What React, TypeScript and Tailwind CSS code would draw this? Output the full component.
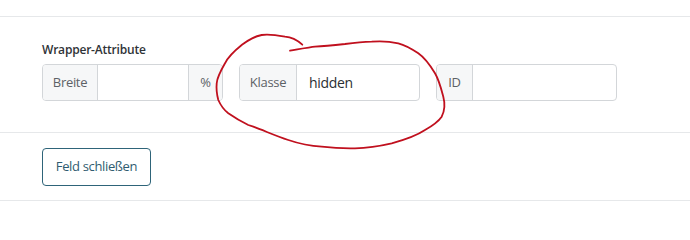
import React from "react";

function Addon({ text, w, side }: { text: string; w: string; side: "l" | "r" }) {
  return (
    <div
      className={
        "flex shrink-0 items-center justify-center bg-[#f6f7f8] text-[13px] tracking-[-0.3px] text-[#5c6166] border-[#d3d6d9] " +
        (side === "l" ? "border-r " : "border-l ") +
        w
      }
    >
      {text}
    </div>
  );
}

export default function App() {
  return (
    <div className="relative w-[690px] h-[210px] bg-white overflow-hidden" style={{ fontFamily: '"Open Sans", "Noto Sans", sans-serif' }}>
      <div className="h-[17px] border-b border-[#e6e8ea]" />
      <div className="pl-[42px] pt-[25px] pb-[31px] border-b border-[#e6e8ea]">
        <div className="text-[12px] font-semibold tracking-[-0.2px] text-[#2f3337] leading-[16px] mb-[6px]">Wrapper-Attribute</div>
        <div className="grid w-[575px] grid-cols-3 gap-4">
          <div className="flex h-[37px] rounded-[4px] border border-[#d3d6d9] bg-white overflow-hidden">
            <Addon text="Breite" w="w-[55px]" side="l" />
            <div className="flex-1" />
            <Addon text="%" w="w-[34px]" side="r" />
          </div>
          <div className="flex h-[37px] rounded-[4px] border border-[#d3d6d9] bg-white overflow-hidden">
            <Addon text="Klasse" w="w-[57px]" side="l" />
            <div className="flex flex-1 items-center pl-[12px] text-[14px] tracking-[-0.3px] text-[#2b2f33]">hidden</div>
          </div>
          <div className="flex h-[37px] rounded-[4px] border border-[#d3d6d9] bg-white overflow-hidden">
            <Addon text="ID" w="w-[36px]" side="l" />
            <div className="flex-1" />
          </div>
        </div>
      </div>
      <div className="pl-[42px] pt-[15px] pb-[14px] border-b border-[#e6e8ea]">
        <button className="h-[38px] w-[109px] rounded-[4px] border border-[#2e6479] text-[13px] tracking-[-0.35px] text-[#2f5c70] bg-white">
          Feld schließen
        </button>
      </div>
      <svg className="absolute left-0 top-0 pointer-events-none" width="690" height="210" viewBox="0 0 690 210">
        <path
          d="M302.3 44.7 C296 39 290 37 285 36.7 C276 35 268 34 261.7 35 C252 37 247 41 241.7 45 C233 52 228 57 225 63.3 C220 72 217 78 216.7 83.3 C216 90 217 95 218.3 100 C221 106 224 110 228.3 113.3 C235 118 242 122 248.3 125 L253.3 126.7 C265 131 276 136 288.3 140 C300 144 310 146 321.7 146.7 C333 148 344 148.5 355 148.3 C368 148 380 146 391.7 143.3 C404 140 416 136 425 130 C432 126 438 122 441.7 116.7 C445 110 445 103 443.3 96.7 C441 88 439 80 435 73.3 C430 65 425 58 418.3 53.3 C412 49 405 45 398.3 43.3 C390 41.5 380 41 371.7 41.7 C362 42 353 43 345 44 C335 45 325 46 315 46.7 C306 48 297 49 290 50.7"
          fill="none"
          stroke="#c0101e"
          strokeWidth="1.8"
          strokeLinecap="round"
          strokeLinejoin="round"
        />
      </svg>
    </div>
  );
}
